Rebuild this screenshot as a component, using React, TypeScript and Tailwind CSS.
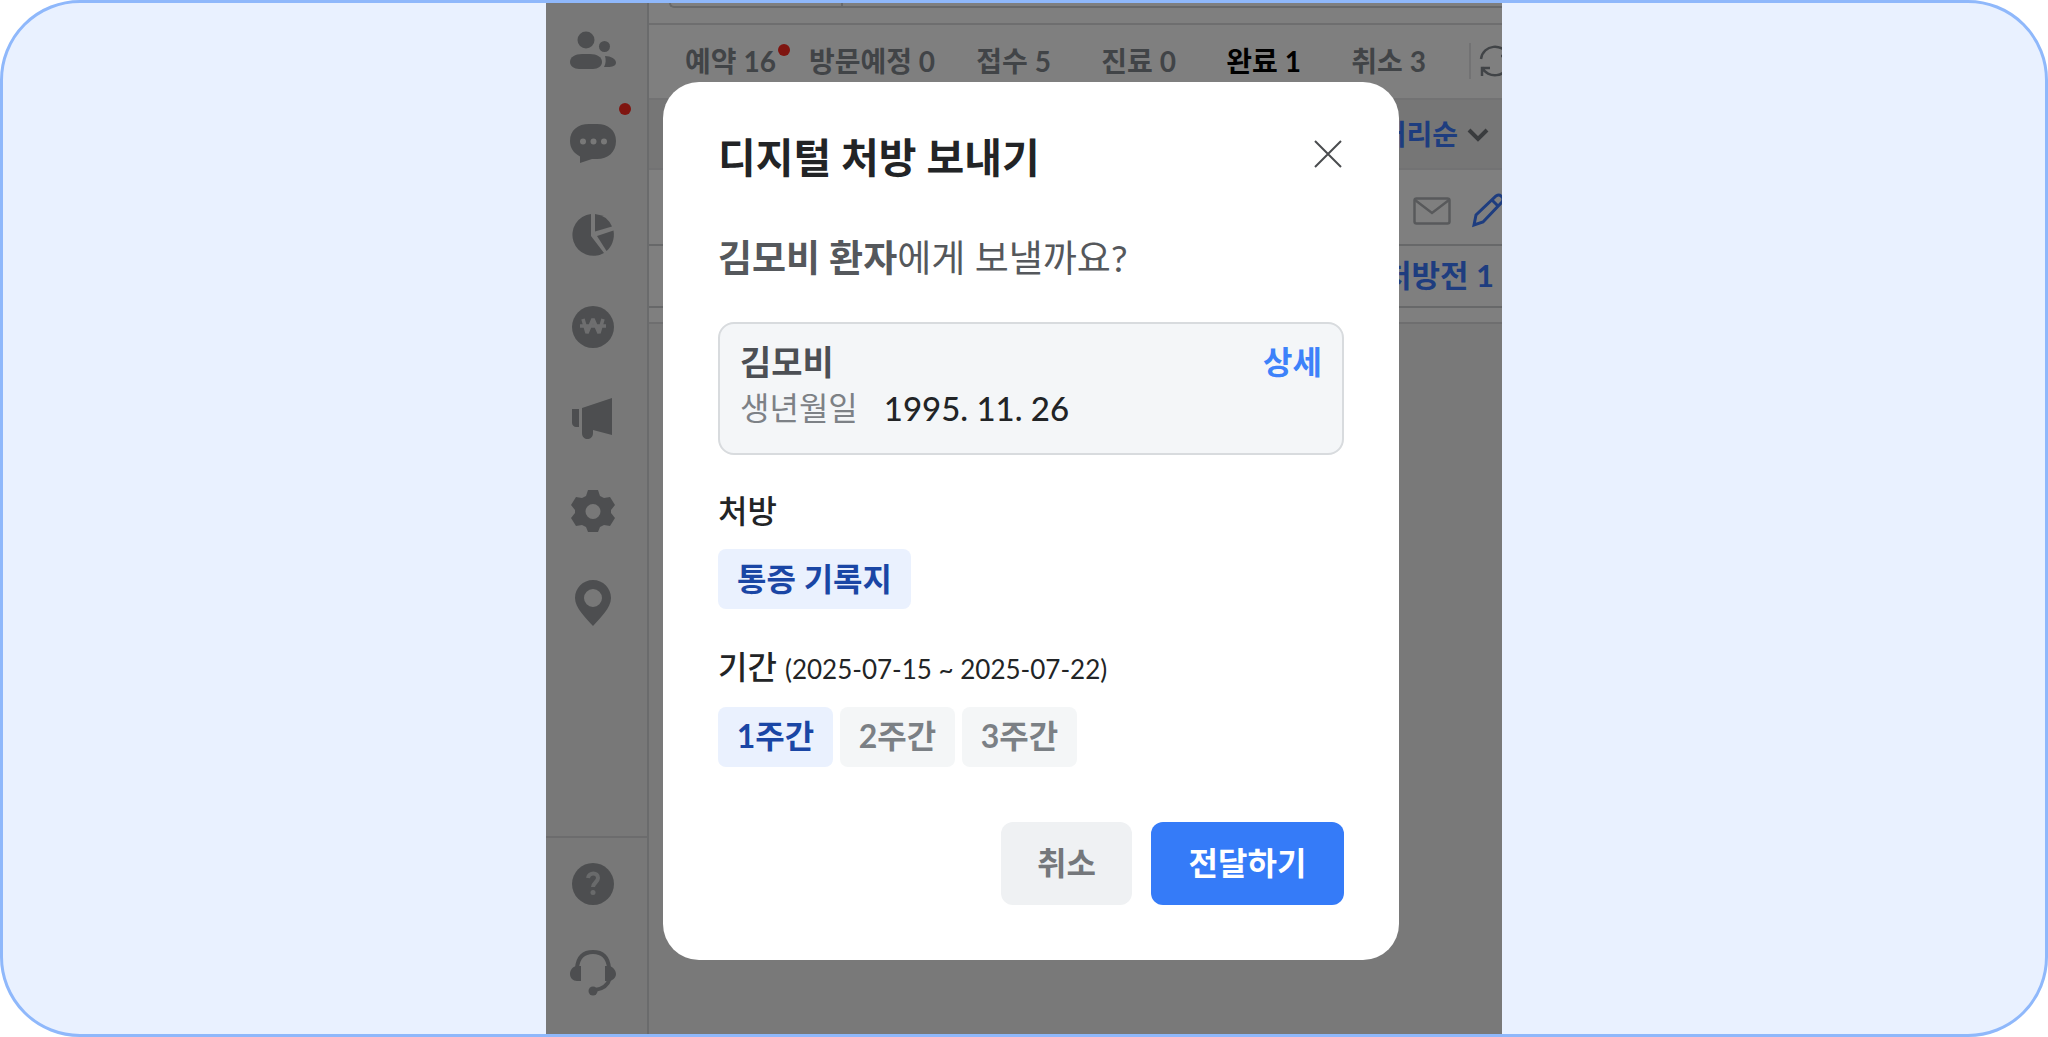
import type { ReactNode } from "react";
import { useState } from "react";

const tabs = [
  { id: "reserved", label: "예약", count: 16, isNew: true },
  { id: "visit", label: "방문예정", count: 0 },
  { id: "received", label: "접수", count: 5 },
  { id: "treating", label: "진료", count: 0 },
  { id: "done", label: "완료", count: 1 },
  { id: "canceled", label: "취소", count: 3 },
];

const periods = ["1주간", "2주간", "3주간"];

function SideButton({ label, children }: { label: string; children: ReactNode }) {
  return (
    <button type="button" aria-label={label} className="flex h-12 w-12 items-center justify-center">
      <svg viewBox="0 0 48 48" className="h-12 w-12" fill="currentColor">
        {children}
      </svg>
    </button>
  );
}

function Sidebar() {
  return (
    <nav className="flex w-[103px] shrink-0 flex-col justify-between border-r-2 border-[#d4d6d8] bg-[#f0f0f0] text-[#9a9da0]">
      <div className="flex flex-col items-center gap-11 pt-6 pr-2">
        <SideButton label="환자">
          <circle cx="17" cy="13" r="8.5" />
          <circle cx="35.5" cy="19.5" r="5.5" />
          <path d="M1 35c0-5 5-8 12-8h8c7 0 12 3 12 8 0 4-4 7-9 7H10c-5 0-9-3-9-7z" />
          <path d="M36 29c6 0 11 3 11 6.5S43 40 39 40h-4c2-4 2-7 1-11z" />
        </SideButton>
        <div className="relative h-12">
          <SideButton label="메시지">
            <path
              fillRule="evenodd"
              d="M20 5h8c11 0 19 6 19 17s-8 18-19 18h-5l-12 4v-6.500C4.500 34 1 29 1 22 1 11 9 5 20 5zM14 19.500a3 3 0 1 0 0 6 3 3 0 0 0 0-6zM24.500 19.500a3 3 0 1 0 0 6 3 3 0 0 0 0-6zM35 19.500a3 3 0 1 0 0 6 3 3 0 0 0 0-6z"
            />
          </SideButton>
          <span className="absolute -top-4 -right-3.5 h-3 w-3 rounded-full bg-[#ff2a20]" />
        </div>
        <SideButton label="통계">
          <path d="M22 3v22l13 17A21 21 0 1 1 22 3z" />
          <path d="M26 3a21 21 0 0 1 17 12.500L26 20.500z" />
          <path d="M44.500 19.500c1.500 8-1.500 16-7 20.500L28 25z" />
        </SideButton>
        <SideButton label="수납">
          <circle cx="24" cy="24" r="21" />
          <path
            d="M14 16l4 14 6-14 6 14 4-14M11 23h26"
            fill="none"
            stroke="#dcdddf"
            strokeWidth="3.5"
            strokeLinejoin="bevel"
          />
        </SideButton>
        <SideButton label="홍보">
          <path d="M3 14h7v18H7c-2 0-4-2-4-4z" />
          <path d="M13 13l30-10v37l-19-5v3c0 8-11 8-11 0z" />
        </SideButton>
        <SideButton label="설정">
          <path
            fillRule="evenodd"
            d="M19 3h10l2 6 4 2 6-1 5 8-4 5v3l4 5-5 8-6-1-4 2-2 5H19l-2-5-4-2-6 1-5-8 4-5v-3l-4-5 5-8 6 1 4-2zM24 17a7.500 7.500 0 1 0 0 15 7.500 7.500 0 0 0 0-15z"
          />
        </SideButton>
        <SideButton label="위치">
          <path
            fillRule="evenodd"
            d="M24 1c10 0 18 8 18 18S31 39 24 47C17 39 6 29 6 19S14 1 24 1zm0 9a9 9 0 1 0 0 18 9 9 0 0 0 0-18z"
          />
        </SideButton>
      </div>
      <div className="flex flex-col items-center gap-10 border-t-2 border-[#d8d9db] pt-[22px] pr-2 pb-[38px]">
        <SideButton label="도움말">
          <circle cx="24" cy="24" r="21" />
          <path d="M19 18c1-6 10-6 10 0 0 4-5 5-5 9" fill="none" stroke="#d3d5d7" strokeWidth="4" />
          <circle cx="24" cy="32.5" r="2.5" fill="#d3d5d7" />
        </SideButton>
        <SideButton label="고객센터">
          <path
            d="M8 20C9 9 15 4 24 4s15 5 16 16M41 30c-2 7-7 11-15 12"
            fill="none"
            stroke="currentColor"
            strokeWidth="4"
          />
          <path d="M12 18v15H8c-4 0-7-3-7-7s3-8 7-8zM36 18h4c3 0 7 4 7 8s-4 7-7 7h-4z" />
          <circle cx="24" cy="43" r="4.5" />
        </SideButton>
      </div>
    </nav>
  );
}

function Reception() {
  return (
    <main className="flex min-w-0 flex-1 flex-col bg-[#f3f3f3] font-bold text-[#83888e]">
      <div className="h-[22px] border-b-2 border-[#dcdddf] bg-white pl-5">
        <div className="flex h-[5px] rounded-bl-lg border-b-2 border-l-2 border-[#d0d2d4]">
          <span className="w-[172px] border-r-2 border-[#d0d2d4]" />
        </div>
      </div>

      <div className="flex h-[73px] items-center overflow-hidden bg-white pb-0.5 pl-[19px] text-[28px]">
        {tabs.map((tab) => (
          <button
            key={tab.id}
            type="button"
            className={`min-w-[125px] shrink-0 px-4 whitespace-nowrap ${tab.id === "done" ? "text-black" : ""}`}
          >
            <span className="relative">
              {tab.label} {tab.count}
              {tab.isNew && <span className="absolute top-0 -right-3.5 h-3 w-3 rounded-full bg-[#ff2a20]" />}
            </span>
          </button>
        ))}
        <button type="button" aria-label="새로고침" className="ml-[18px] shrink-0 border-l-2 border-[#e4e5e6] py-0.5 pl-2">
          <svg viewBox="0 0 32 32" className="h-8 w-8" fill="none" stroke="currentColor" strokeWidth="2.5">
            <path d="M2 14C4 -1 24 -2 29 10M30 3v8h-8M30 18C28 33 8 34 3 22M3 31v-8h8" />
          </svg>
        </button>
      </div>

      <div className="flex h-[72px] items-center justify-end gap-2 border-y-2 border-[#e4e5e6] bg-[#ececec] pr-3 text-[28px] text-[#3d7bff]">
        <button type="button">처리순</button>
        <svg viewBox="0 0 24 24" className="h-6 w-6 text-[#74787c]" fill="none" stroke="currentColor" strokeWidth="4">
          <path d="M3 8l9 9 9-9" />
        </svg>
      </div>

      <div className="flex h-[76px] items-center justify-end gap-5 overflow-hidden border-b-2 border-[#cfd1d3] bg-white pt-2">
        <button type="button" aria-label="메일">
          <svg
            viewBox="0 0 38 28"
            className="h-7 w-[38px] text-[#b0b3b6]"
            fill="none"
            stroke="currentColor"
            strokeWidth="2.5"
          >
            <rect x="1.5" y="1.5" width="35" height="25" rx="2" />
            <path d="M2 3l17 13L36 3" />
          </svg>
        </button>
        <button type="button" aria-label="수정" className="w-[31px] overflow-hidden pb-0.5">
          <svg viewBox="0 0 36 36" className="h-9 w-9 text-[#3d7bff]" fill="none" stroke="currentColor" strokeWidth="3">
            <path d="M3 33l2-10L25 4q3-2 5 0l1 1q2 2 0 5L12 30zM21 8l7 7" />
          </svg>
        </button>
      </div>

      <div className="flex h-[62px] items-center justify-end border-b-2 border-[#cfd1d3] bg-white pr-2 pb-0.5 text-[31px] text-[#3d7bff]">
        <button type="button">처방전 1</button>
      </div>
      <div className="h-4 border-b-2 border-[#dcdddf] bg-white" />
    </main>
  );
}

function PrescriptionDialog() {
  const [period, setPeriod] = useState("1주간");

  return (
    <section
      role="dialog"
      aria-labelledby="dialog-title"
      className="w-[736px] rounded-[36px] bg-white px-[55px] pt-12 pb-[55px] text-[32px] leading-[44px] text-[#222426]"
    >
      <header className="flex items-start justify-between">
        <h1 id="dialog-title" className="text-[41px] leading-[56px] font-bold">
          디지털 처방 보내기
        </h1>
        <button type="button" aria-label="닫기" className="pt-2">
          <svg viewBox="0 0 32 32" className="h-8 w-8 text-[#4a4c4f]" fill="none" stroke="currentColor" strokeWidth="2">
            <path d="M3 3l26 26M29 3L3 29" />
          </svg>
        </button>
      </header>

      <p className="mt-[50px] text-[37px] text-[#55585c]">
        <strong>김모비 환자</strong>에게 보낼까요?
      </p>

      <div className="mt-[42px] h-[133px] rounded-2xl border-2 border-[#d8dbde] bg-[#f4f6f8] px-5 pt-4">
        <div className="flex items-center justify-between">
          <strong className="text-[34px] text-[#4c4f54]">김모비</strong>
          <button type="button" className="font-bold text-[#3d82fa]">
            상세
          </button>
        </div>
        <dl className="mt-0.5 flex gap-[26px]">
          <dt className="text-[#7d8186]">생년월일</dt>
          <dd className="text-[33px] font-medium">1995. 11. 26</dd>
        </dl>
      </div>

      <h2 className="mt-[34px] font-medium">처방</h2>
      <button type="button" className="mt-4 h-[60px] rounded-lg bg-[#eaf1fe] px-[19px] font-bold text-[#1a46a5]">
        통증 기록지
      </button>

      <h2 className="mt-9 font-medium">
        기간 <span className="text-[26px] font-normal">(2025-07-15 ~ 2025-07-22)</span>
      </h2>
      <div className="mt-4 flex gap-[7px]">
        {periods.map((item) => (
          <button
            key={item}
            type="button"
            onClick={() => setPeriod(item)}
            className={`h-[60px] w-[115px] rounded-lg pb-0.5 font-bold ${
              item === period ? "bg-[#eaf1fe] text-[#1a46a5]" : "bg-[#f4f6f7] text-[#7b8085]"
            }`}
          >
            {item}
          </button>
        ))}
      </div>

      <footer className="mt-[55px] flex justify-end gap-[19px] font-bold">
        <button type="button" className="h-[83px] w-[131px] rounded-xl bg-[#eff1f3] pb-0.5 text-[#74777b]">
          취소
        </button>
        <button type="button" className="h-[83px] w-[193px] rounded-xl bg-[#357bf8] pb-0.5 text-white">
          전달하기
        </button>
      </footer>
    </section>
  );
}

export default function App() {
  return (
    <div className="flex min-h-screen justify-center overflow-hidden rounded-[80px] border-3 border-[#8fb8fb] bg-[#e9f1ff] font-[Lato,'Noto_Sans_CJK_KR',sans-serif]">
      <div className="relative flex w-[956px]">
        <Sidebar />
        <Reception />
        <div className="absolute inset-0 bg-black/50 pt-[79px] pl-[117px]">
          <PrescriptionDialog />
        </div>
      </div>
    </div>
  );
}
